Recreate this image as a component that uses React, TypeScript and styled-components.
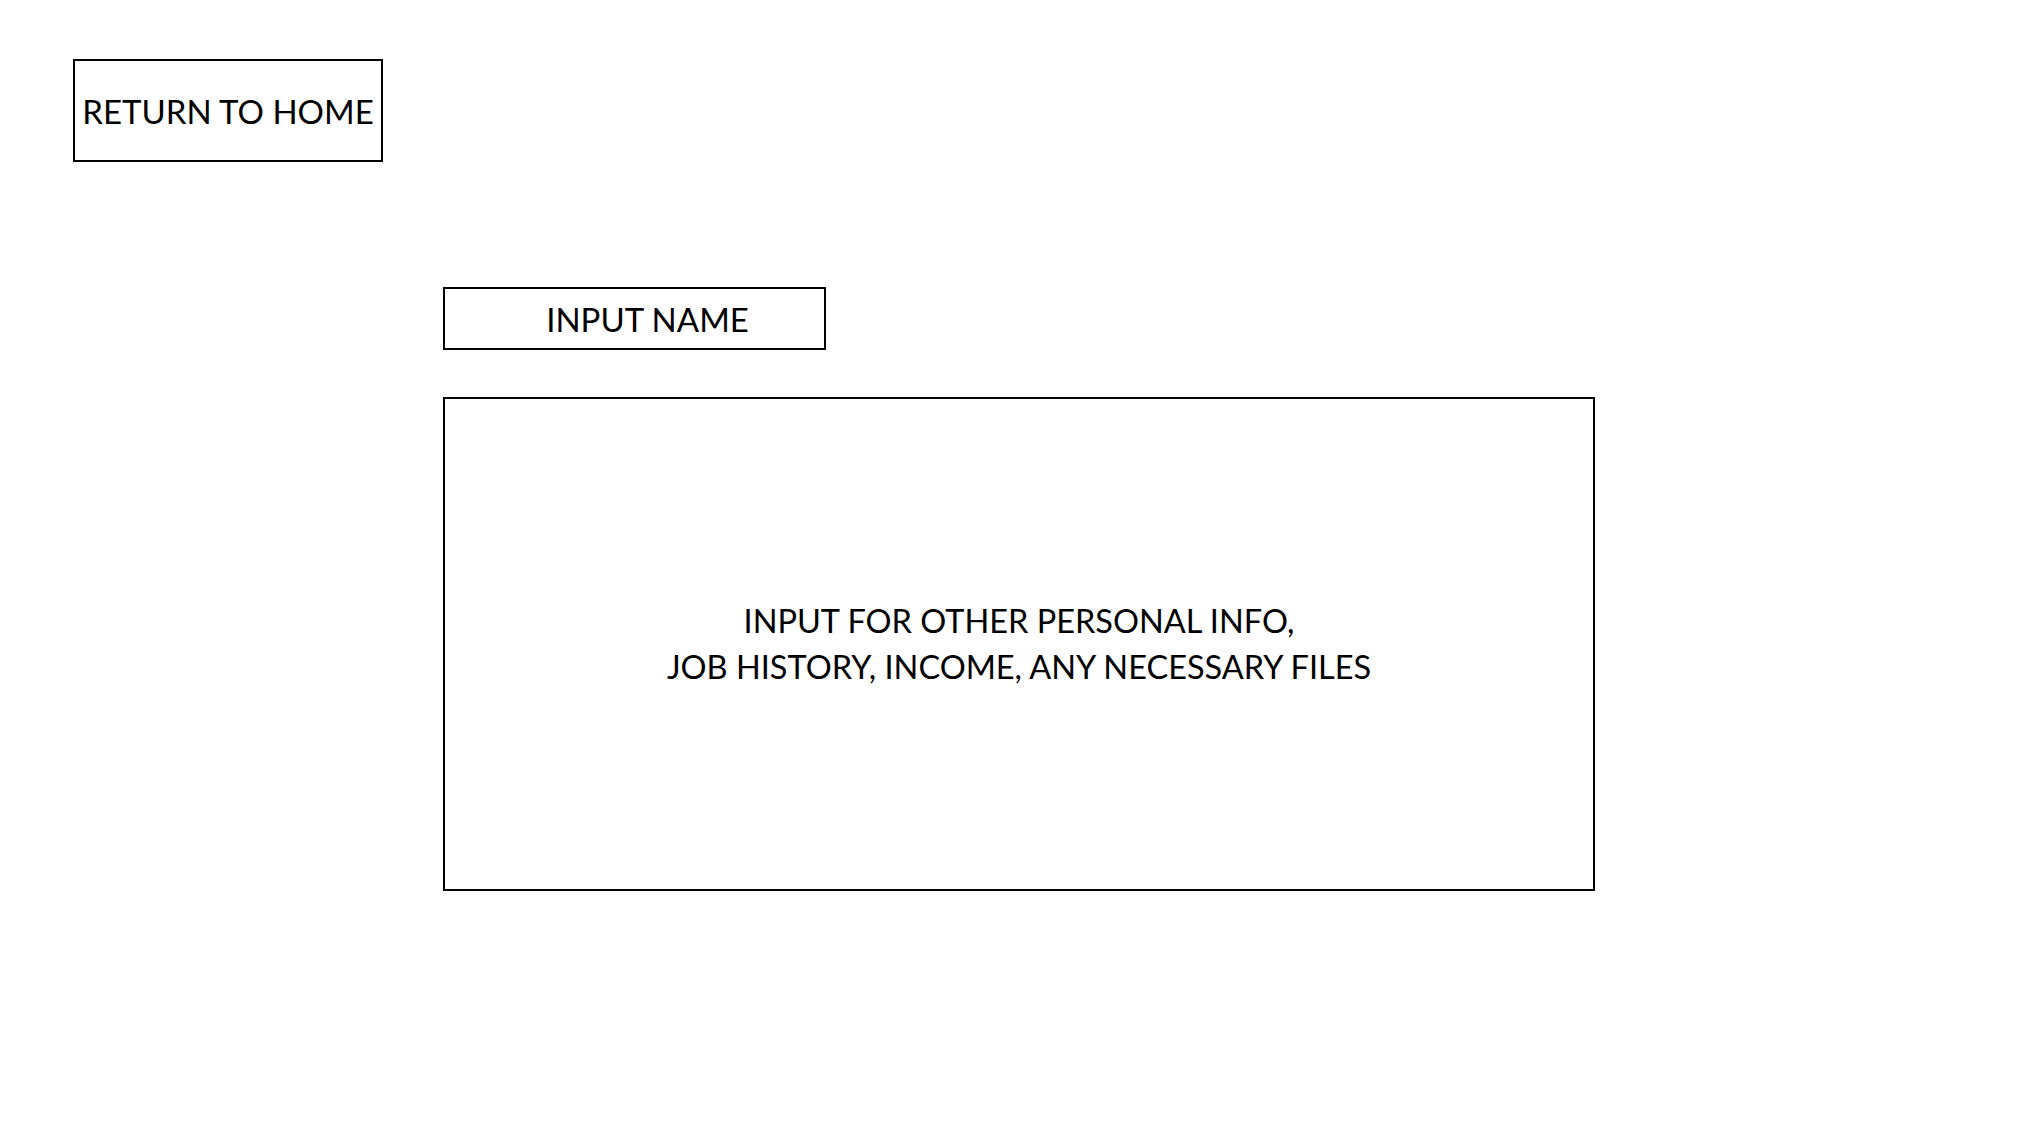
import React from 'react';
import styled, { createGlobalStyle } from 'styled-components';

const GlobalStyle = createGlobalStyle`
    html, body {
        margin: 0;
        padding: 0;
        background: #ffffff;
    }
    body {
        font-family: Lato, "Open Sans", sans-serif;
        color: #000000;
    }
`;

const Page = styled.div`
    width: 2040px;
    height: 1148px;
    box-sizing: border-box;
    padding: 59px 0 0 73px;
    display: flex;
    flex-direction: column;
    align-items: flex-start;
`;

const HomeButton = styled.button`
    width: 310px;
    height: 103px;
    box-sizing: border-box;
    border: 2px solid #000;
    background: #fff;
    font-family: inherit;
    font-size: 33px;
    color: #000;
    padding: 0;
    display: flex;
    align-items: center;
    justify-content: center;
    cursor: pointer;
`;

const Form = styled.div`
    margin: 125px 0 0 370px;
    display: flex;
    flex-direction: column;
    gap: 47px;
`;

const NameField = styled.div`
    width: 383px;
    height: 63px;
    box-sizing: border-box;
    border: 2px solid #000;
    padding-left: 26px;
    display: flex;
    align-items: center;
    justify-content: center;
    font-size: 33px;
`;

const InfoBox = styled.div`
    width: 1152px;
    height: 494px;
    box-sizing: border-box;
    border: 2px solid #000;
    display: flex;
    align-items: center;
    justify-content: center;
    text-align: center;
    font-size: 32.5px;
    line-height: 46px;
`;

const App = () => (
    <>
        <GlobalStyle />
        <Page>
            <HomeButton>RETURN TO HOME</HomeButton>
            <Form>
                <NameField>INPUT NAME</NameField>
                <InfoBox>
                    INPUT FOR OTHER PERSONAL INFO,
                    <br />
                    JOB HISTORY, INCOME, ANY NECESSARY FILES
                </InfoBox>
            </Form>
        </Page>
    </>
);

export default App;
